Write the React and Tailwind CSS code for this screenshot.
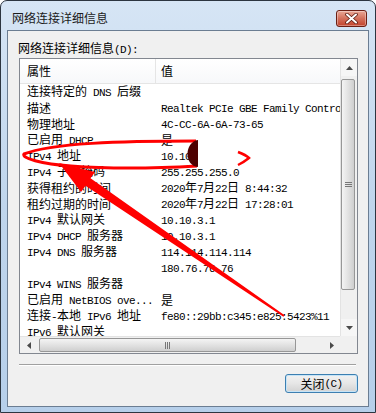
import React from 'react';

const rows = [
  ['连接特定的 DNS 后缀', ''],
  ['描述', 'Realtek PCIe GBE Family Controller'],
  ['物理地址', '4C-CC-6A-6A-73-65'],
  ['已启用 DHCP', '是'],
  ['IPv4 地址', '10.10'],
  ['IPv4 子网掩码', '255.255.255.0'],
  ['获得租约的时间', '2020年7月22日 8:44:32'],
  ['租约过期的时间', '2020年7月22日 17:28:01'],
  ['IPv4 默认网关', '10.10.3.1'],
  ['IPv4 DHCP 服务器', '10.10.3.1'],
  ['IPv4 DNS 服务器', '114.114.114.114'],
  ['', '180.76.76.76'],
  ['IPv4 WINS 服务器', ''],
  ['已启用 NetBIOS ove...', '是'],
  ['连接-本地 IPv6 地址', 'fe80::29bb:c345:e825:5423%11'],
  ['IPv6 默认网关', ''],
];

// ascii runs get the narrow typewriter face, like SimSun's half-width glyphs
const Mix = ({ s }) =>
  s.split(/([\x20-\x7e]+)/).map((p, i) =>
    /[\x20-\x7e]/.test(p) ? (
      <span key={i} className="font-['Liberation_Mono',monospace] text-[11px] tracking-[-0.6px]">{p}</span>
    ) : (
      p
    )
  );

const Arrow = ({ dir }) => {
  const pts = {
    up: '0,4 3.5,0 7,4',
    down: '0,0 3.5,4 7,0',
    left: '4,0 0,3.5 4,7',
    right: '0,0 4,3.5 0,7',
  }[dir];
  const vert = dir === 'up' || dir === 'down';
  return (
    <svg width={vert ? 7 : 4} height={vert ? 4 : 7}>
      <polygon points={pts} fill="#4a4a4a" />
    </svg>
  );
};

export default function App() {
  return (
    <div className="relative w-[376px] h-[413px] flex flex-col rounded-t-[7px] border border-[#2c3540] bg-gradient-to-b from-[#d6e5f5] via-[#bfd5ec] to-[#b6cfea] px-[6px] pb-[5px] font-['Noto_Sans_CJK_SC',sans-serif] text-[12px] text-black">
      {/* title bar */}
      <div className="h-[29px] flex items-start justify-between">
        <div className="pl-[5px] pt-[9px] leading-[16px] text-[#1b1b1b]">网络连接详细信息</div>
        <div className="mt-[9px] mr-[2px] w-[31px] h-[17px] rounded-[3px] border border-[#6b1f14] bg-gradient-to-b from-[#e9a897] via-[#d3705c] to-[#c2412a] flex items-center justify-center shadow-[inset_0_0_0_1px_rgba(255,255,255,0.35)]">
          <svg width="13" height="11" viewBox="0 0 13 11">
            <path d="M2 1.5 L11 9.5 M11 1.5 L2 9.5" stroke="#5a1a10" strokeWidth="3.6" strokeLinecap="round" />
            <path d="M2 1.5 L11 9.5 M11 1.5 L2 9.5" stroke="#ffffff" strokeWidth="2" strokeLinecap="round" />
          </svg>
        </div>
      </div>

      {/* client area */}
      <div className="flex-1 flex flex-col border border-[#6b7d92] bg-[#f0f0f0]">
        <div className="mt-[9px] pl-[10px] leading-[16px]">
          网络连接详细信息<Mix s="(D):" />
        </div>

        <div className="ml-[11px] mr-[10px] h-[296px] flex flex-col border border-[#828790] bg-white">
          <div className="flex h-[277px]">
            <div className="w-[320px] flex flex-col overflow-hidden">
              <div className="h-[25px] shrink-0 flex items-center border-b border-[#e5e5e5] bg-gradient-to-b from-white to-[#f7f8fa]">
                <div className="w-[136px] h-full flex items-center pl-[7px] border-r border-[#e5e5e5]">属性</div>
                <div className="pl-[5px]">值</div>
              </div>
              <div className="flex-1 overflow-hidden">
                {rows.map(([k, v], i) => (
                  <div key={i} className="h-[16px] flex items-center whitespace-pre leading-[16px]">
                    <div className="w-[135px] shrink-0 pl-[7px] overflow-hidden"><Mix s={k} /></div>
                    <div className="pl-[6px]"><Mix s={v} /></div>
                  </div>
                ))}
              </div>
            </div>

            {/* vertical scrollbar */}
            <div className="w-[17px] flex flex-col border-l border-[#e3e3e3] bg-[#f0f0f0]">
              <div className="h-[17px] flex items-center justify-center bg-[#f6f6f6]"><Arrow dir="up" /></div>
              <div className="mt-[3px] ml-[0px] w-[14px] h-[211px] rounded-[2px] border border-[#979797] bg-gradient-to-r from-[#f4f4f4] via-[#e2e2e2] to-[#cfcfcf] flex items-center justify-center">
                <div className="flex flex-col gap-[1px]">
                  <div className="w-[7px] h-[1px] bg-[#777]" />
                  <div className="w-[7px] h-[1px] bg-[#777]" />
                  <div className="w-[7px] h-[1px] bg-[#777]" />
                </div>
              </div>
              <div className="flex-1" />
              <div className="h-[17px] flex items-center justify-center bg-[#f6f6f6]"><Arrow dir="down" /></div>
            </div>
          </div>

          {/* horizontal scrollbar */}
          <div className="flex h-[17px]">
            <div className="w-[320px] flex items-center bg-[#f0f0f0] border-t border-[#e3e3e3]">
              <div className="w-[17px] h-full flex items-center justify-center"><Arrow dir="left" /></div>
              <div className="ml-[2px] w-[257px] h-[14px] rounded-[2px] border border-[#979797] bg-gradient-to-b from-[#f4f4f4] via-[#e2e2e2] to-[#cfcfcf] flex items-center justify-center">
                <div className="flex gap-[1px]">
                  <div className="w-[1px] h-[7px] bg-[#777]" />
                  <div className="w-[1px] h-[7px] bg-[#777]" />
                  <div className="w-[1px] h-[7px] bg-[#777]" />
                </div>
              </div>
              <div className="flex-1" />
              <div className="w-[17px] h-full flex items-center justify-center"><Arrow dir="right" /></div>
            </div>
            <div className="w-[17px] bg-[#f0f0f0]" />
          </div>
        </div>

        <div className="mt-[10px] ml-[11px] w-[337px] border-t border-[#a0a0a0] border-b border-b-white" />

        <div className="mt-[8px] mr-[10px] flex justify-end">
          <button className="w-[73px] h-[19px] rounded-[3px] border border-[#3c7fb1] bg-gradient-to-b from-[#f2f2f2] via-[#e6e6e6] to-[#d2d2d2] shadow-[inset_0_0_0_1px_#c6e4f7] flex items-center justify-center leading-[16px]">
            关闭<Mix s="(C)" />
          </button>
        </div>
      </div>

      {/* red marks drawn over the screenshot */}
      <svg className="absolute left-0 top-0 pointer-events-none" width="376" height="413" viewBox="0 0 376 413">
        <path d="M195 140 C120 140 50 142 23 153 C20 157 40 163 70 165 C110 168 160 167 196 165" fill="none" stroke="#ff0000" strokeWidth="3" />
        <path d="M197 139 C183 141 183 165 197 166 Z" fill="#4d0000" />
        <path d="M237 151 Q245 154 248 157 Q243 161 237 164" fill="none" stroke="#ff0000" strokeWidth="2.5" />
        <polygon points="58,162 94,171 89.5,177.3 283.6,314.2 282.4,315.8 84.5,184.7 80,191" fill="#ff0000" />
      </svg>
    </div>
  );
}
